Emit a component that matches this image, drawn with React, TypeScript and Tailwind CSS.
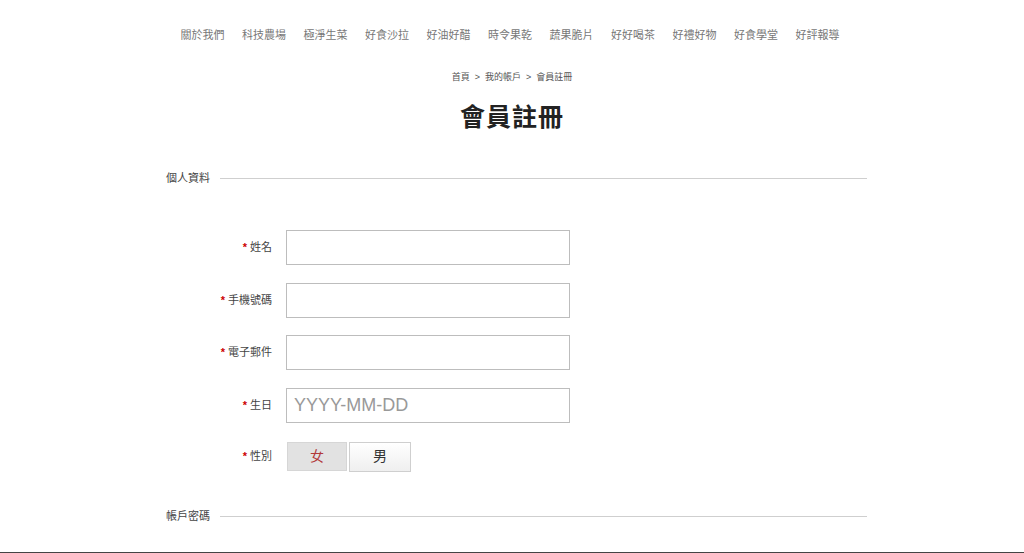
import React from 'react';

const NAV = ['關於我們', '科技農場', '極淨生菜', '好食沙拉', '好油好醋', '時令果乾', '蔬果脆片', '好好喝茶', '好禮好物', '好食學堂', '好評報導'];

const FONT = "font-['Liberation_Sans','Noto_Sans_CJK_TC',sans-serif]";

function Section({ title }: { title: string }) {
  return (
    <div className="flex h-[20px] items-center gap-[10px]">
      <span className="text-[11px] text-[#444]">{title}</span>
      <div className="h-px flex-1 bg-[#cfcfcf]" />
    </div>
  );
}

function Label({ text }: { text: string }) {
  return (
    <label className="flex w-[106px] shrink-0 items-center justify-end text-[11px] text-[#444]">
      <span className="mr-[3px] text-[11px] font-bold text-[#c00]">*</span>
      {text}
    </label>
  );
}

function Field({ label, placeholder }: { label: string; placeholder?: string }) {
  return (
    <div className="flex items-center gap-[14px]">
      <Label text={label} />
      <input
        placeholder={placeholder}
        className="h-[35px] w-[284px] border border-[#bdbdbd] px-[7px] text-[18px] text-[#333] outline-none placeholder:text-[#999]"
      />
    </div>
  );
}

export default function App() {
  return (
    <div className={`min-h-[553px] bg-white ${FONT}`}>
      <nav className="flex h-[70px] items-center justify-center gap-[17.5px] pr-[4px]">
        {NAV.map((n) => (
          <a key={n} className="text-[11px] text-[#777]">
            {n}
          </a>
        ))}
      </nav>
      <div className="flex h-[16px] items-center justify-center gap-[5px] text-[9px] text-[#555]">
        <span>首頁</span>
        <span>&gt;</span>
        <span>我的帳戶</span>
        <span>&gt;</span>
        <span>會員註冊</span>
      </div>
      <h1 className="mt-[13px] text-center text-[25px] leading-[36px] font-bold tracking-[1px] text-[#222]">會員註冊</h1>

      <div className="mx-auto mt-[33px] w-[710px] pl-[9px]">
        <Section title="個人資料" />
        <div className="mt-[42px] flex flex-col gap-[17.5px]">
          <Field label="姓名" />
          <Field label="手機號碼" />
          <Field label="電子郵件" />
          <Field label="生日" placeholder="YYYY-MM-DD" />
          <div className="mt-[1.5px] flex items-center gap-[14px]">
            <Label text="性別" />
            <div className="ml-[1px] flex gap-[2px]">
              <button className="h-[29px] w-[60px] border border-[#d6d6d6] bg-[#e2e2e2] text-[14px] text-[#b23a3a]">女</button>
              <button className="h-[30px] w-[62px] border border-[#cfcfcf] bg-gradient-to-b from-white to-[#efefef] text-[14px] text-[#333]">男</button>
            </div>
          </div>
        </div>
        <div className="mt-[35px]">
          <Section title="帳戶密碼" />
        </div>
      </div>
      <div className="mt-[25px] h-[80px] bg-[#444]" />
    </div>
  );
}
